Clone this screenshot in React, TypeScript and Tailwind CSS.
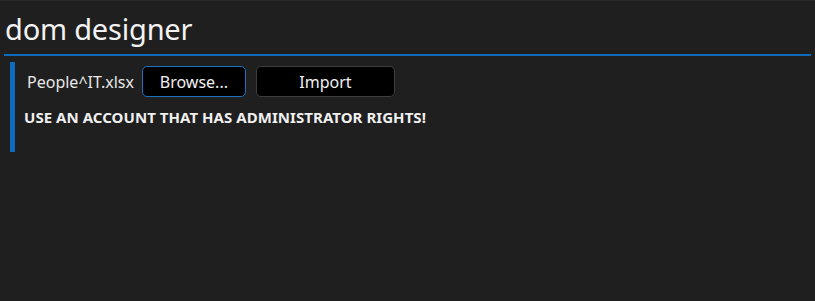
export default function App() {
  return (
    <div
      className="w-[815px] h-[301px] bg-[#1f1f1f] border-t border-[#2b2b2b] overflow-hidden text-[#f0f0f0]"
      style={{ fontFamily: '"Noto Sans", "Open Sans", sans-serif' }}
    >
      <div className="pl-[5px] pt-[10px] h-[44px] text-[29px] leading-[36px] text-[#f2f2f2] tracking-[-0.2px]">
        dom designer
      </div>
      <div className="ml-[4px] w-[807px] h-[2px] bg-[#0f6cbd] mt-[9px]" />
      <div className="flex mt-[6px] ml-[10px]">
        <div className="w-[5px] h-[90px] bg-[#0f6cbd]" />
        <div className="flex flex-col pl-[9px] pt-[4px]">
          <div className="flex items-center">
            <span className="ml-[3px] text-[16px] text-[#e8e8e8]">People^IT.xlsx</span>
            <button className="ml-[8px] w-[104px] h-[31px] rounded-[5px] border border-[#1a73c0] bg-black text-[16px] text-[#f0f0f0]">
              Browse...
            </button>
            <button className="ml-[10px] w-[139px] h-[31px] rounded-[5px] border border-[#3d3d3d] bg-black text-[16px] text-[#f0f0f0]">
              Import
            </button>
          </div>
          <div className="mt-[9px] text-[15px] font-bold text-[#f0f0f0] tracking-[0.05px]">
            USE AN ACCOUNT THAT HAS ADMINISTRATOR RIGHTS!
          </div>
        </div>
      </div>
    </div>
  );
}
